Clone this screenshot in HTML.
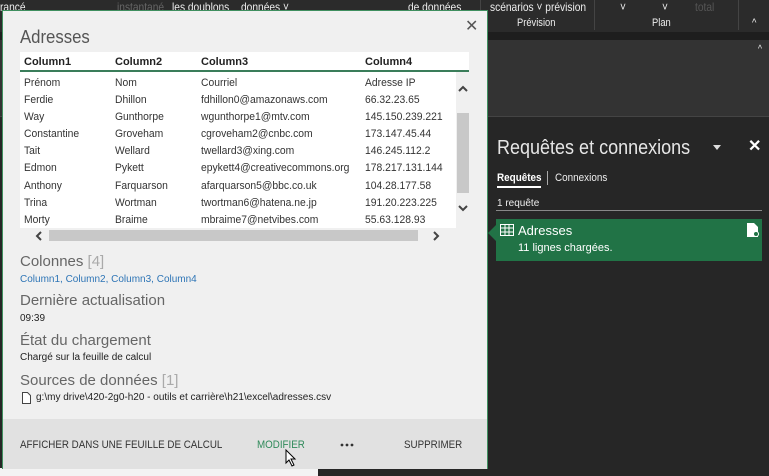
<!DOCTYPE html>
<html><head><meta charset="utf-8"><style>
*{margin:0;padding:0;box-sizing:border-box}
body{width:769px;height:476px;overflow:hidden;background:#262626;font-family:"Liberation Sans",sans-serif;position:relative}
.a{position:absolute;white-space:nowrap}
.sx{transform:scaleX(.85);transform-origin:left top}
.rib{left:0;top:0;width:769px;height:32px;background:#2b2b2b}
.rib2{left:0;top:32px;width:769px;height:8px;background:#1e1e1e}
.fx{left:0;top:40px;width:769px;height:76px;background:#333}
.rt{color:#eee;font-size:12px;transform:scaleX(.85);transform-origin:left top}
.pop{left:2px;top:10px;width:486px;height:459px;background:#f0f0f0;border:1px solid #3f8f5f}
.tbl{left:17px;top:41px;width:449px;height:176px;background:#fff}
.c{font-size:11px;color:#333;transform:scaleX(.94);transform-origin:left top}
.h{font-size:11px;color:#222;font-weight:bold}
.sec{font-size:15px;color:#666}
.sm{font-size:10px;color:#222}
.ft{font-size:11px;color:#333;transform:scaleX(.89);transform-origin:left top}
</style></head><body>
<div class="a rib"></div>
<div class="a rt" style="left:0;top:0;">rancé</div>
<div class="a rt" style="left:117px;top:0;color:#666">instantané</div>
<div class="a rt" style="left:172px;top:0">les doublons</div>
<div class="a rt" style="left:241px;top:0">données ˅</div>
<div class="a rt" style="left:408px;top:0">de données</div>
<div class="a rt" style="left:490px;top:0">scénarios ˅ prévision</div>
<div class="a rt" style="left:620px;top:0">˅</div>
<div class="a rt" style="left:662px;top:0">˅</div>
<div class="a rt" style="left:695px;top:0;color:#555">total</div>
<div class="a" style="left:480px;top:0;width:1px;height:30px;background:#444"></div>
<div class="a" style="left:594px;top:0;width:1px;height:30px;background:#444"></div>
<div class="a" style="left:738px;top:0;width:1px;height:30px;background:#444"></div>
<div class="a rt" style="left:517px;top:17px;font-size:11px">Prévision</div>
<div class="a rt" style="left:652px;top:17px;font-size:11px">Plan</div>
<div class="a rt" style="left:752px;top:17px;font-size:11px">^</div>
<div class="a rib2"></div>
<div class="a fx"></div>
<div class="a" style="left:0;top:116px;width:769px;height:1px;background:#444"></div>
<div class="a rt" style="left:758px;top:44px;font-size:10px">^</div>
<div class="a" style="left:0;top:468px;width:318px;height:8px;background:#f3f3f3"></div>

<div class="a sx" style="left:497px;top:137px;font-size:20px;color:#e6e6e6;transform:scaleX(.9)">Requêtes et connexions</div>
<div class="a" style="left:713px;top:145px;width:0;height:0;border-left:4px solid transparent;border-right:4px solid transparent;border-top:5px solid #ddd"></div>
<div class="a" style="left:748px;top:136px;font-size:16px;color:#fff;font-weight:bold">✕</div>
<div class="a sx" style="left:497px;top:172px;font-size:11px;color:#fff;font-weight:bold;transform:scaleX(.9)">Requêtes</div>
<div class="a" style="left:497px;top:186px;width:44px;height:2px;background:#fff"></div>
<div class="a" style="left:547px;top:171px;width:1px;height:14px;background:#aaa"></div>
<div class="a sx" style="left:555px;top:172px;font-size:11px;color:#eee;transform:scaleX(.9)">Connexions</div>
<div class="a" style="left:497px;top:198px;font-size:10px;color:#eee">1 requête</div>
<div class="a" style="left:496px;top:210px;width:266px;height:1px;background:#888"></div>
<div class="a" style="left:496px;top:219px;width:266px;height:42px;background:#217346"></div>
<div class="a" style="left:488px;top:225px;width:0;height:0;border-top:8px solid transparent;border-bottom:8px solid transparent;border-right:8px solid #217346"></div>
<svg class="a" style="left:500px;top:224px" width="14" height="12"><rect x="0.5" y="0.5" width="13" height="11" fill="none" stroke="#fff"/><path d="M0 4h14M0 8h14M5 0v12M9 0v12" stroke="#fff"/></svg>
<div class="a" style="left:518px;top:223px;font-size:13px;color:#fff">Adresses</div>
<div class="a" style="left:518px;top:242px;font-size:11px;color:#fff">11 lignes chargées.</div>
<svg class="a" style="left:747px;top:223px" width="12" height="14"><path d="M0 0h7l4 4v10H0z" fill="#fff"/><circle cx="9" cy="11" r="2.5" fill="#217346" stroke="#fff"/></svg>

<div class="a pop">
<div class="a" style="left:17px;top:16px;font-size:18px;color:#555;transform:scaleX(.93);transform-origin:left top">Adresses</div>
<div class="a" style="left:462px;top:5px;font-size:16px;color:#555">✕</div>
<div class="a tbl">
<div class="a" style="left:0;top:18px;width:449px;height:2px;background:#3a7d5a"></div>
<div class="a h" style="left:4px;top:4px">Column1</div><div class="a h" style="left:95px;top:4px">Column2</div><div class="a h" style="left:181px;top:4px">Column3</div><div class="a h" style="left:345px;top:4px">Column4</div>
<div class="a" style="left:4px;top:23px;line-height:17.1px" ><div class="c">Prénom<br>Ferdie<br>Way<br>Constantine<br>Tait<br>Edmon<br>Anthony<br>Trina<br>Morty</div></div>
<div class="a" style="left:95px;top:23px;line-height:17.1px"><div class="c">Nom<br>Dhillon<br>Gunthorpe<br>Groveham<br>Wellard<br>Pykett<br>Farquarson<br>Wortman<br>Braime</div></div>
<div class="a" style="left:181px;top:23px;line-height:17.1px"><div class="c">Courriel<br>fdhillon0@amazonaws.com<br>wgunthorpe1@mtv.com<br>cgroveham2@cnbc.com<br>twellard3@xing.com<br>epykett4@creativecommons.org<br>afarquarson5@bbc.co.uk<br>twortman6@hatena.ne.jp<br>mbraime7@netvibes.com</div></div>
<div class="a" style="left:345px;top:23px;line-height:17.1px"><div class="c">Adresse IP<br>66.32.23.65<br>145.150.239.221<br>173.147.45.44<br>146.245.112.2<br>178.217.131.144<br>104.28.177.58<br>191.20.223.225<br>55.63.128.93</div></div>
<div class="a" style="left:436px;top:20px;width:13px;height:156px;background:#f0f0f0"></div>
<div class="a" style="left:437px;top:61px;width:12px;height:80px;background:#c8c8c8"></div>
<svg class="a" style="left:438px;top:33px" width="10" height="7"><path d="M1 6l4-4 4 4" fill="none" stroke="#444" stroke-width="2"/></svg>
<svg class="a" style="left:438px;top:153px" width="10" height="7"><path d="M1 1l4 4 4-4" fill="none" stroke="#444" stroke-width="2"/></svg>
</div>
<div class="a" style="left:17px;top:217px;width:436px;height:14px;background:#f0f0f0"></div>
<div class="a" style="left:46px;top:219px;width:369px;height:11px;background:#c8c8c8"></div>
<svg class="a" style="left:32px;top:220px" width="7" height="10"><path d="M6 1L2 5l4 4" fill="none" stroke="#444" stroke-width="2"/></svg>
<svg class="a" style="left:430px;top:220px" width="7" height="10"><path d="M1 1l4 4-4 4" fill="none" stroke="#444" stroke-width="2"/></svg>

<div class="a sec" style="left:17px;top:242px">Colonnes <span style="color:#aaa">[4]</span></div>
<div class="a" style="left:17px;top:263px;font-size:10px;color:#2e75b6">Column1, Column2, Column3, Column4</div>
<div class="a sec" style="left:17px;top:281px">Dernière actualisation</div>
<div class="a sm" style="left:17px;top:302px">09:39</div>
<div class="a sec" style="left:17px;top:321px">État du chargement</div>
<div class="a sm" style="left:17px;top:341px">Chargé sur la feuille de calcul</div>
<div class="a sec" style="left:17px;top:361px">Sources de données <span style="color:#aaa">[1]</span></div>
<svg class="a" style="left:19px;top:381px" width="9" height="12"><path d="M.5 .5h5l3 3v8h-8z" fill="#fff" stroke="#444"/></svg>
<div class="a sm" style="left:33px;top:381px">g:\my drive\420-2g0-h20 - outils et carrière\h21\excel\adresses.csv</div>
<div class="a" style="left:0;top:408px;width:484px;height:50px;background:#e1e1e1"></div>
<div class="a ft" style="left:17px;top:428px">AFFICHER DANS UNE FEUILLE DE CALCUL</div>
<div class="a ft" style="left:254px;top:428px;color:#2f8a5a">MODIFIER</div>
<svg class="a" style="left:337px;top:432px" width="14" height="4"><circle cx="2" cy="2" r="1.4" fill="#333"/><circle cx="7" cy="2" r="1.4" fill="#333"/><circle cx="12" cy="2" r="1.4" fill="#333"/></svg>
<div class="a ft" style="left:401px;top:428px">SUPPRIMER</div>
<svg class="a" style="left:282px;top:438px" width="12" height="18"><path d="M1 1v13l3-3 3 6 2-1-3-6h4z" fill="#fff" stroke="#000"/></svg>
</div>
</body></html>
